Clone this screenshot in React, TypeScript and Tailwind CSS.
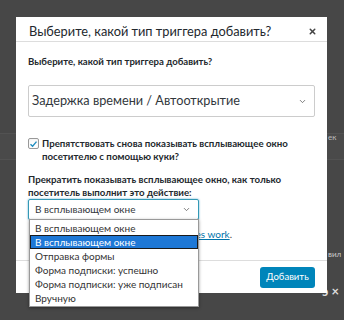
import { ChevronDown, X } from "lucide-react";

const options = [
    "В всплывающем окне",
    "В всплывающем окне",
    "Отправка формы",
    "Форма подписки: успешно",
    "Форма подписки: уже подписан",
    "Вручную",
];

function CheckIcon() {
    return (
        <svg viewBox="0 0 12 12" className="h-[10px] w-[10px]">
            <path d="M2 6.2 L4.8 9 L10 2.8" fill="none" stroke="#1e8cbe" strokeWidth="1.8" />
        </svg>
    );
}

export default function App() {
    return (
        <div
            className="relative h-[320px] w-[344px] overflow-hidden bg-[#474747] text-[#23282d]"
            style={{ fontFamily: 'Lato, "Noto Sans", sans-serif' }}
        >
            {/* page behind the overlay */}
            <div className="absolute left-0 right-0 top-[133px] h-[27px] border-y border-[#525252] bg-[#4a4a4a]" />
            <span className="absolute left-[328px] top-[131px] text-[8px] text-[#bbb]">ек</span>
            <span className="absolute left-[328px] top-[248px] text-[8px] text-[#ccc]">вил</span>
            <span className="absolute left-[322px] top-[282px] text-[13px] font-bold text-[#ddd]">ↄ ×</span>

            <div className="absolute left-[16px] top-[17px] flex h-[276px] w-[311px] flex-col bg-white">
                <header className="flex h-[25px] items-center justify-between border-b border-[#ddd] pl-[13px] pr-[10px] pt-[4px]">
                    <h1 className="text-[12.8px] leading-none text-[#23282d]">
                        Выберите, какой тип триггера добавить?
                    </h1>
                    <X className="h-[9px] w-[9px] text-[#444]" strokeWidth={4} />
                </header>

                <div className="flex-1 px-[12px]">
                    <p className="mt-[13px] text-[9.6px] font-bold leading-[13px]">
                        Выберите, какой тип триггера добавить?
                    </p>
                    <div className="mt-[17px] flex h-[32px] items-center justify-between rounded-[2px] border border-[#ccc] pl-[3px] pr-[7px]">
                        <span className="text-[12.7px] text-[#32373c]">Задержка времени / Автооткрытие</span>
                        <ChevronDown className="h-[9px] w-[9px] text-[#555]" strokeWidth={2} />
                    </div>

                    <div className="mt-[21px] flex items-start gap-[3px]">
                        <span className="flex h-[11px] w-[11px] shrink-0 items-center justify-center rounded-[2px] border border-[#999] shadow-inner">
                            <CheckIcon />
                        </span>
                        <p className="-mt-[1px] text-[9.7px] font-bold leading-[13px]">
                            Препятствовать снова показывать всплывающее окно
                            <br />
                            посетителю с помощью куки?
                        </p>
                    </div>

                    <p className="mt-[10px] text-[9.7px] font-bold leading-[12.5px]">
                        Прекратить показывать всплывающее окно, как только
                        <br />
                        посетитель выполнит это действие:
                    </p>
                    <div className="mt-[1px] flex h-[21px] w-[171px] items-center justify-between rounded-[2px] border border-[#3399b5] pl-[6px] pr-[7px] shadow-[0_0_2px_rgba(30,140,190,0.8)]">
                        <span className="text-[10px] text-[#32373c]">В всплывающем окне</span>
                        <ChevronDown className="h-[9px] w-[9px] text-[#555]" strokeWidth={2} />
                    </div>
                    <p className="mt-[8px] w-[204px] text-right text-[10px] leading-[12px] text-[#444]">
                        Learn more about how <a className="text-[#0073aa] underline">cookies work</a>.
                    </p>
                </div>

                <footer className="flex h-[33px] items-center justify-end border-t border-[#ddd] pr-[12px]">
                    <button className="h-[21px] w-[55px] rounded-[3px] bg-[#0085ba] text-[9.5px] text-white">
                        Добавить
                    </button>
                </footer>
            </div>

            {/* open native dropdown list */}
            <ul className="absolute left-[29px] top-[219px] w-[170px] border border-[#999] bg-white py-[1px] shadow-[0_1px_3px_rgba(0,0,0,0.4)]">
                {options.map((o, i) => (
                    <li
                        key={i}
                        className={
                            i === 1
                                ? "h-[14px] border border-[#1a1a1a] bg-[#1e78d6] pl-[4px] text-[10px] leading-[12px] text-white"
                                : "h-[14px] pl-[5px] text-[10px] leading-[14px] text-[#333]"
                        }
                    >
                        {o}
                    </li>
                ))}
            </ul>
        </div>
    );
}
